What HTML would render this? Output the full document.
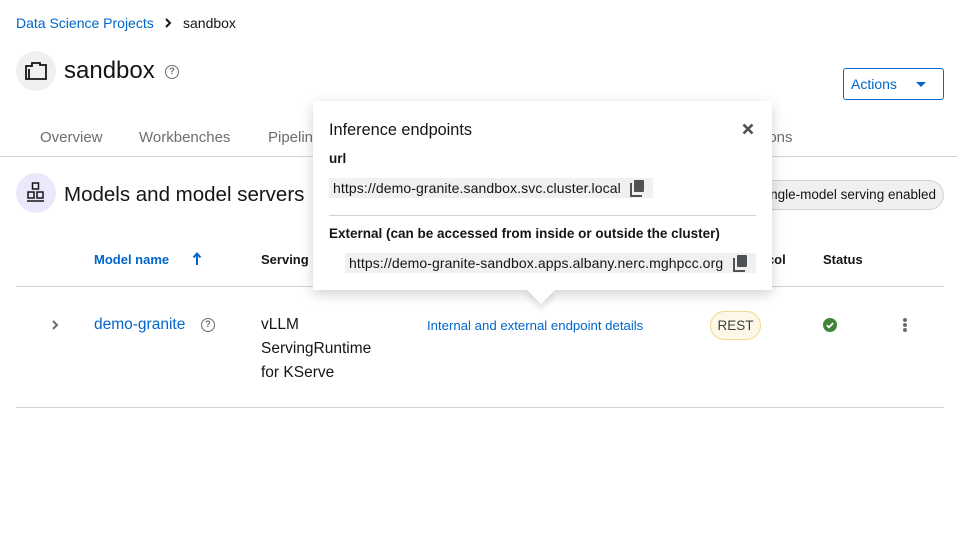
<!DOCTYPE html>
<html><head><meta charset="utf-8"><style>
*{box-sizing:border-box;margin:0;padding:0}
body{width:957px;height:556px;background:#fff;font-family:"Liberation Sans",sans-serif;color:#151515;position:relative;overflow:hidden}
.a{position:absolute;white-space:nowrap}
.blue{color:#0066cc}
.help{position:absolute;width:14px;height:14px;border:1.5px solid #6a6e73;border-radius:50%;font-size:9px;font-weight:bold;color:#6a6e73;text-align:center;line-height:11px}
.code{position:absolute;background:#f0f0f0;font-size:14px;height:20px;line-height:20px;padding-left:4px;letter-spacing:0.1px}
.copy{position:absolute;width:10px;height:12px;background:#4f5255;border-radius:1px}
.copy:before{content:"";position:absolute;left:-4px;top:3px;width:10px;height:12px;border-left:2.5px solid #4f5255;border-bottom:2.5px solid #4f5255}
</style></head><body>
<div class="a blue" style="left:16px;top:15px;font-size:14px">Data Science Projects</div>
<svg class="a" style="left:164px;top:18px" width="8" height="10" viewBox="0 0 8 10"><path d="M2 1 L6 5 L2 9" fill="none" stroke="#151515" stroke-width="2"/></svg>
<div class="a" style="left:183px;top:15px;font-size:14px">sandbox</div>

<div class="a" style="left:16px;top:51px;width:40px;height:40px;border-radius:50%;background:#f0f0f0"></div>
<svg class="a" style="left:24px;top:60px" width="24" height="22" viewBox="0 0 24 22"><path d="M2 6 H8 V3 H16 V5 H22 V19 H2 Z M5 9 V19" fill="none" stroke="#151515" stroke-width="1.8"/></svg>
<div class="a" style="left:64px;top:57px;font-size:24px">sandbox</div>
<div class="help" style="left:165px;top:65px">?</div>

<div class="a" style="left:843px;top:68px;width:101px;height:32px;border:1px solid #0066cc;border-radius:3px"></div>
<div class="a blue" style="left:851px;top:76px;font-size:14px">Actions</div>
<div class="a" style="left:916px;top:82px;border-left:5px solid transparent;border-right:5px solid transparent;border-top:5px solid #0066cc"></div>

<div class="a" style="left:40px;top:129px;font-size:15px;color:#6a6e73">Overview</div>
<div class="a" style="left:139px;top:129px;font-size:15px;color:#6a6e73">Workbenches</div>
<div class="a" style="left:268px;top:129px;font-size:15px;color:#6a6e73">Pipelines</div>
<div class="a" style="left:765px;top:129px;font-size:15px;color:#6a6e73">ions</div>
<div class="a" style="left:0;top:156px;width:957px;height:1px;background:#d2d2d2"></div>

<div class="a" style="left:16px;top:173px;width:40px;height:40px;border-radius:50%;background:#ece8fb"></div>
<svg class="a" style="left:24px;top:181px" width="24" height="24" viewBox="0 0 24 24" fill="none" stroke="#151515" stroke-width="1.5"><rect x="8.5" y="2" width="6" height="6"/><rect x="4" y="11" width="6" height="6"/><rect x="13" y="11" width="6" height="6"/><path d="M3 20H20"/></svg>
<div class="a" style="left:64px;top:183px;font-size:20.5px">Models and model servers</div>

<div class="a" style="left:700px;top:180px;width:244px;height:30px;border:1px solid #d2d2d2;border-radius:15px;background:#f0f0f0"></div>
<div class="a" style="left:700px;top:187px;font-size:13.5px;width:236px;text-align:right;color:#151515">single-model serving enabled</div>

<div class="a blue" style="left:94px;top:252px;font-size:13px;font-weight:bold">Model name</div>
<svg class="a" style="left:192px;top:252px" width="10" height="14" viewBox="0 0 10 14"><path d="M5 13 V2 M1.5 5.5 L5 1.5 L8.5 5.5" fill="none" stroke="#0066cc" stroke-width="2"/></svg>
<div class="a" style="left:261px;top:252px;font-size:13px;font-weight:bold">Serving runtime</div>
<div class="a" style="left:733px;top:252px;font-size:13px;font-weight:bold">Protocol</div>
<div class="a" style="left:823px;top:252px;font-size:13px;font-weight:bold">Status</div>
<div class="a" style="left:16px;top:286px;width:928px;height:1px;background:#d2d2d2"></div>

<svg class="a" style="left:51px;top:320px" width="8" height="10" viewBox="0 0 8 10"><path d="M2 1 L6 5 L2 9" fill="none" stroke="#6a6e73" stroke-width="2"/></svg>
<div class="a blue" style="left:94px;top:316px;font-size:15.5px">demo-granite</div>
<div class="help" style="left:201px;top:318px">?</div>
<div class="a" style="left:261px;top:313px;font-size:15.5px;line-height:24px">vLLM<br>ServingRuntime<br>for KServe</div>
<div class="a blue" style="left:427px;top:318px;font-size:13.2px">Internal and external endpoint details</div>
<div class="a" style="left:710px;top:311px;width:51px;height:29px;border:1px solid #f4d88c;border-radius:15px;background:#fdf7e7;font-size:13.5px;text-align:center;line-height:27px;color:#3c3f42">REST</div>
<svg class="a" style="left:823px;top:318px" width="14" height="14" viewBox="0 0 14 14"><circle cx="7" cy="7" r="7" fill="#3e8635"/><path d="M3.8 7.2 L6 9.3 L10.2 5" fill="none" stroke="#fff" stroke-width="1.8"/></svg>
<div class="a" style="left:903px;top:318px;width:4px;height:4px;border-radius:50%;background:#6a6e73;box-shadow:0 5px 0 #6a6e73,0 10px 0 #6a6e73"></div>
<div class="a" style="left:16px;top:407px;width:928px;height:1px;background:#d2d2d2"></div>

<div class="a" style="left:313px;top:101px;width:459px;height:189px;background:#fff;box-shadow:0 4px 12px rgba(3,3,3,.18)"></div>
<div class="a" style="left:531px;top:280px;width:20px;height:20px;background:#fff;transform:rotate(45deg);box-shadow:4px 4px 6px rgba(3,3,3,.1)"></div>
<div class="a" style="left:313px;top:270px;width:459px;height:20px;background:#fff"></div>
<div class="a" style="left:329px;top:121px;font-size:16.3px">Inference endpoints</div>
<svg class="a" style="left:742px;top:123px" width="12" height="12" viewBox="0 0 12 12"><path d="M1.5 1.5 L10.5 10.5 M10.5 1.5 L1.5 10.5" stroke="#4f5255" stroke-width="2.6"/></svg>
<div class="a" style="left:329px;top:151px;font-size:13.5px;font-weight:bold">url</div>
<div class="code" style="left:329px;top:178px;width:324px">https://demo-granite.sandbox.svc.cluster.local</div>
<div class="copy" style="left:634px;top:180px"></div>
<div class="a" style="left:329px;top:215px;width:427px;height:1px;background:#d2d2d2"></div>
<div class="a" style="left:329px;top:226px;font-size:13.5px;font-weight:bold">External (can be accessed from inside or outside the cluster)</div>
<div class="code" style="left:345px;top:253px;width:411px">https://demo-granite-sandbox.apps.albany.nerc.mghpcc.org</div>
<div class="copy" style="left:737px;top:255px"></div>
</body></html>
